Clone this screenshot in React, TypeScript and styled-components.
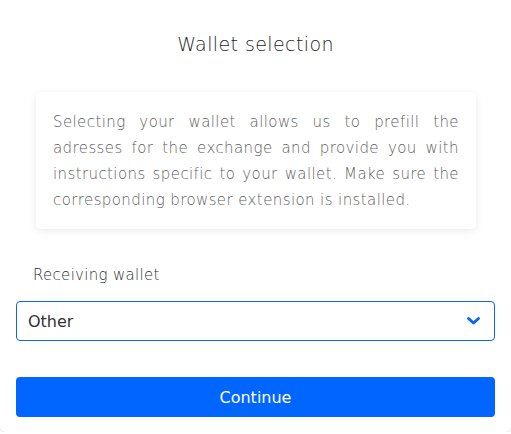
import React from 'react';
import styled, { createGlobalStyle } from 'styled-components';

const GlobalStyle = createGlobalStyle`
  html, body {
    margin: 0;
    padding: 0;
    background: #ffffff;
    font-family: "DejaVu Sans", Verdana, sans-serif;
  }
`;

const Card = styled.div`
  width: 511px;
  height: 432px;
  box-sizing: border-box;
  background: #ffffff;
  border-radius: 0 0 6px 6px;
  box-shadow: 0 1px 2px rgba(0, 0, 0, 0.12);
  padding: 32px 16px 0;
  display: flex;
  flex-direction: column;
`;

const Title = styled.h1`
  margin: 0;
  font-size: 19px;
  line-height: 24px;
  font-weight: 200;
  color: #1e1e1e;
  text-align: center;
  letter-spacing: 0.4px;
`;

const InfoBox = styled.div`
  margin: 36px 19px 0 20px;
  padding: 17px 17px 16px;
  background: #ffffff;
  border-radius: 4px;
  box-shadow: 0 2px 8px rgba(0, 0, 0, 0.08), 0 0 1px rgba(0, 0, 0, 0.06);
  font-size: 15px;
  line-height: 26px;
  font-weight: 200;
  color: #5e5e5e;
  text-align: justify;
  letter-spacing: 0.4px;
`;

const Label = styled.label`
  display: block;
  margin: 36px 0 0 17px;
  font-size: 15px;
  line-height: 20px;
  font-weight: 200;
  color: #303030;
  letter-spacing: 0.3px;
`;

const SelectBox = styled.div`
  margin-top: 16px;
  height: 40px;
  box-sizing: border-box;
  border: 1px solid #0a66f5;
  border-radius: 4px;
  display: flex;
  align-items: center;
  justify-content: space-between;
  padding: 0 13px 0 11px;
  font-size: 16px;
  color: #333333;
  cursor: pointer;
`;

const Button = styled.button`
  margin-top: 36px;
  height: 40px;
  width: 100%;
  border: none;
  border-radius: 4px;
  background: #0066ff;
  color: #ffffff;
  font-family: inherit;
  font-size: 16px;
  cursor: pointer;
`;

const Chevron = () => (
  <svg width="15" height="10" viewBox="0 0 15 10">
    <path d="M2.5 2.5 L7.5 7 L12.5 2.5" fill="none" stroke="#0a66f5" strokeWidth="3" strokeLinecap="round" strokeLinejoin="round" />
  </svg>
);

export default function App() {
  return (
    <>
      <GlobalStyle />
      <Card>
        <Title>Wallet selection</Title>
        <InfoBox>
          Selecting your wallet allows us to prefill the adresses for the exchange and provide you with
          instructions specific to your wallet. Make sure the corresponding browser extension is installed.
        </InfoBox>
        <Label>Receiving wallet</Label>
        <SelectBox>
          <span>Other</span>
          <Chevron />
        </SelectBox>
        <Button>Continue</Button>
      </Card>
    </>
  );
}
